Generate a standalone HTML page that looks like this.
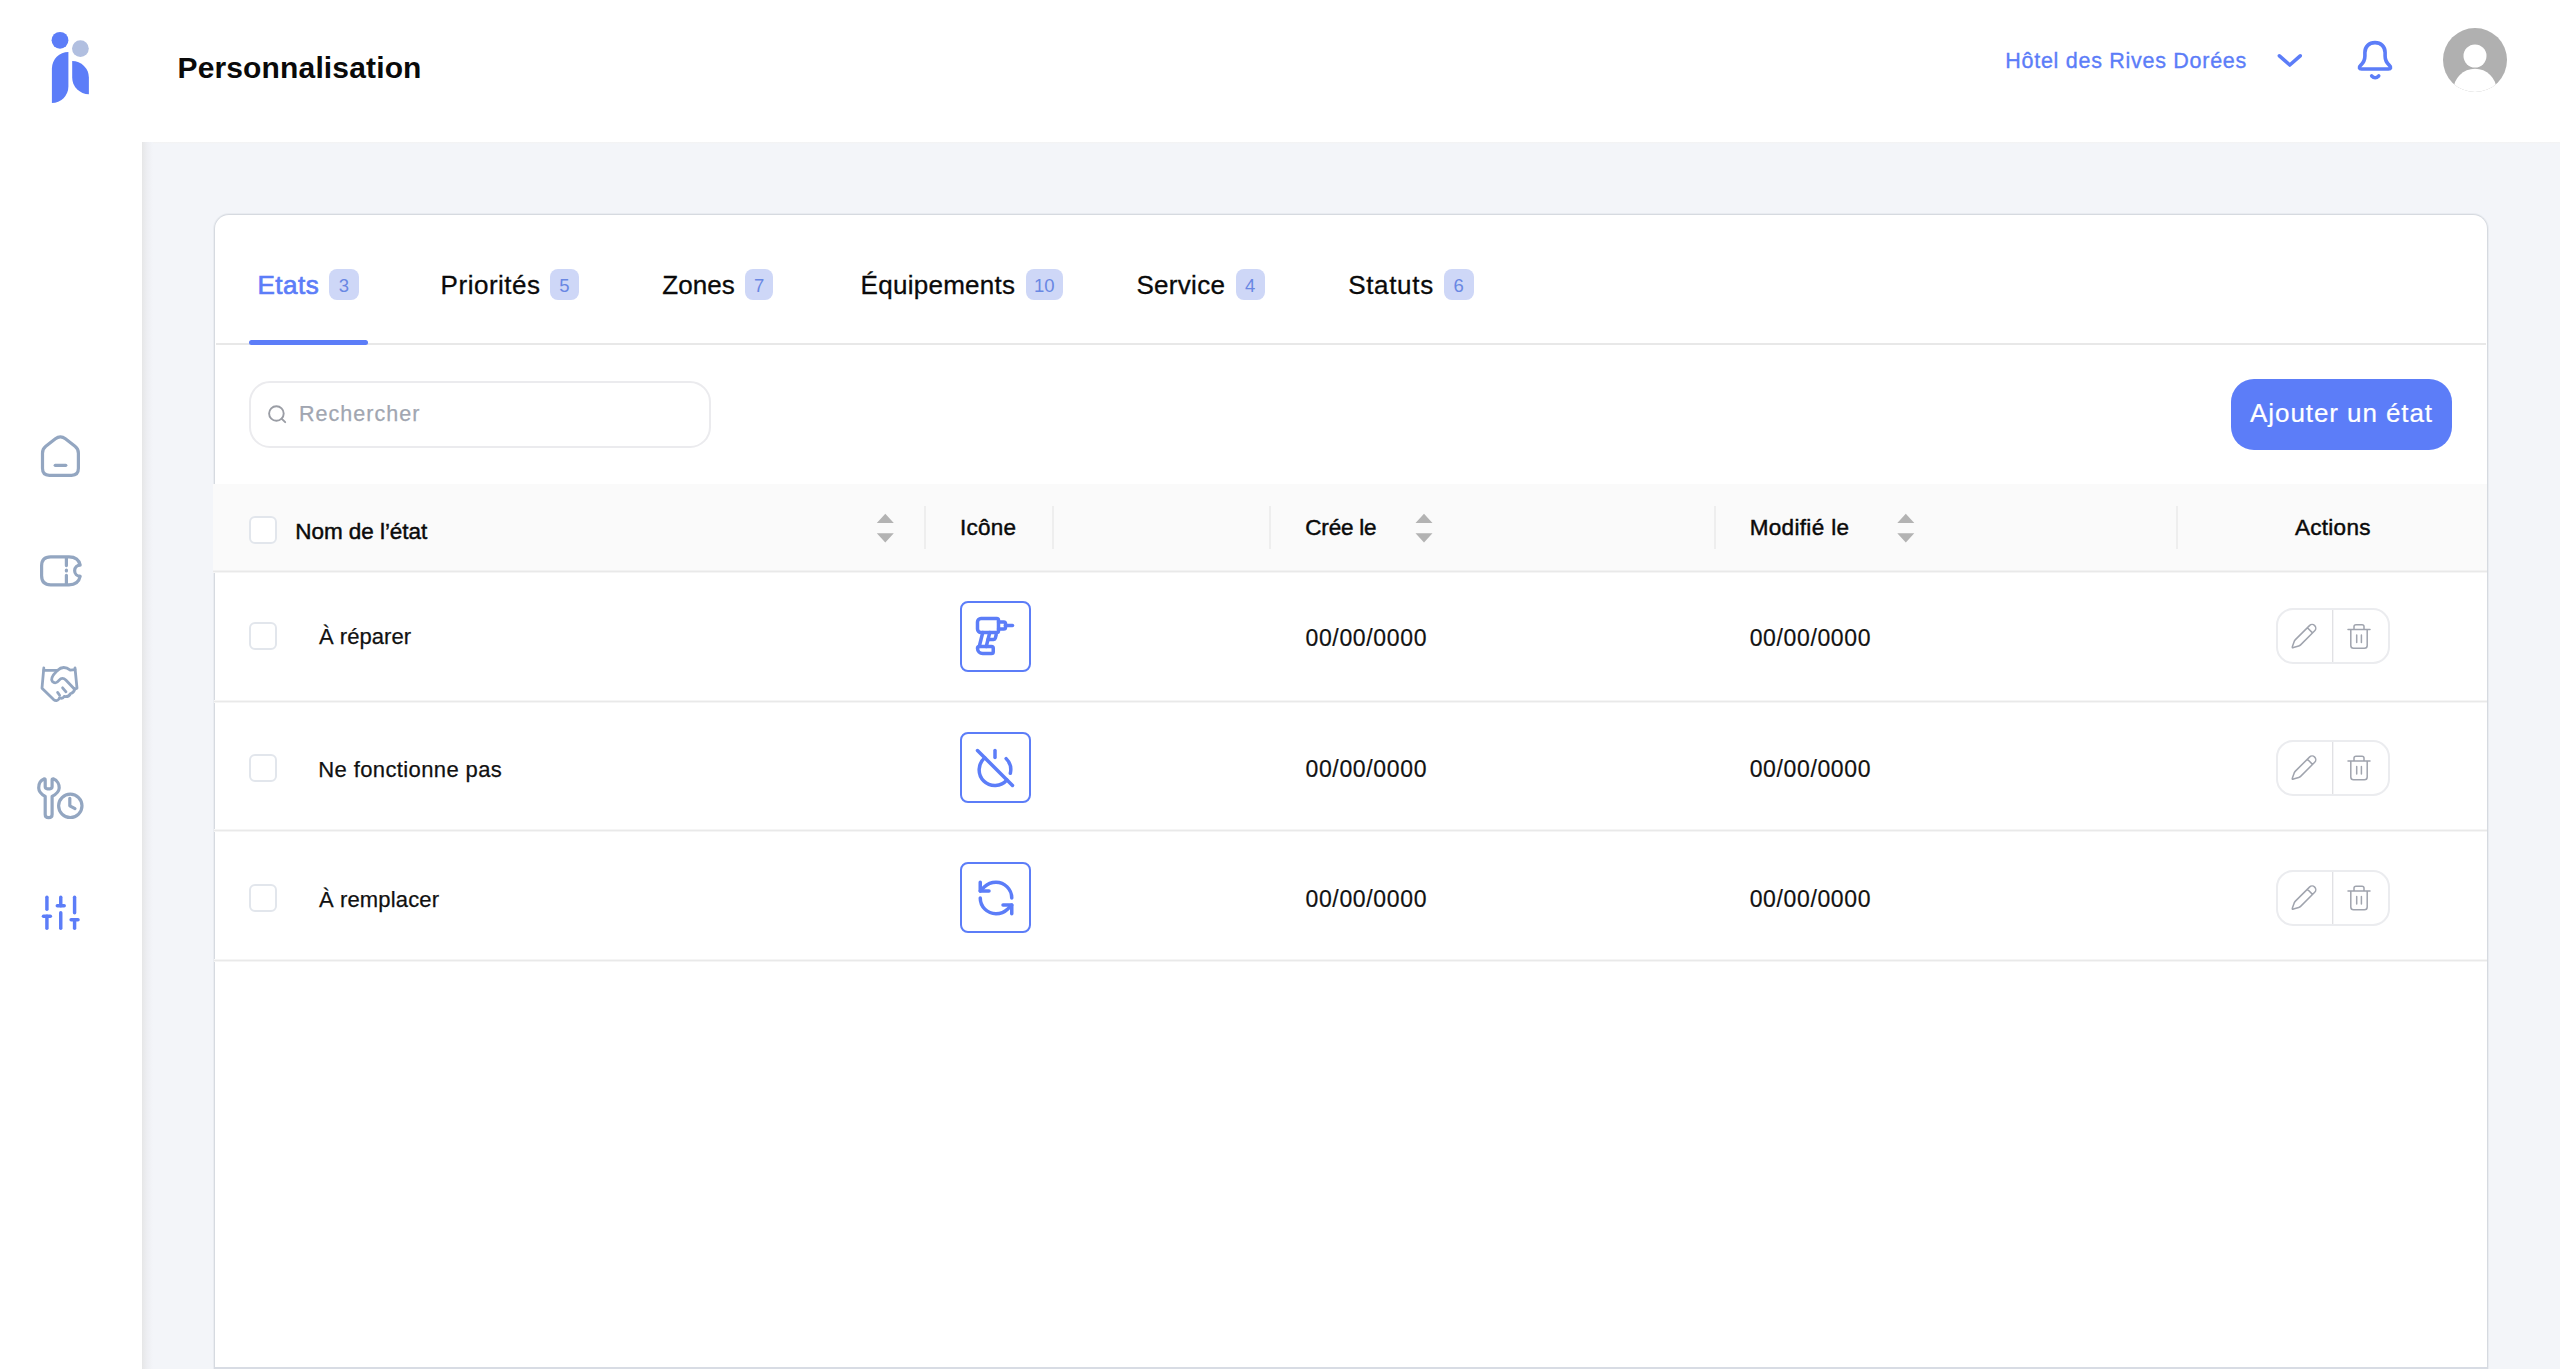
<!DOCTYPE html>
<html lang="fr">
<head>
<meta charset="utf-8">
<title>Personnalisation</title>
<style>
*{box-sizing:border-box;margin:0;padding:0}
html,body{width:2560px;height:1369px;overflow:hidden;background:#fff;font-family:"Liberation Sans",sans-serif}
.abs,.t,.badge,svg{position:absolute}
.t{white-space:nowrap;line-height:1em;display:block}
#main{left:142px;top:142px;width:2418px;height:1227px;background:#f3f5f9}
#main .shl{left:0;top:0;width:11px;height:100%;background:linear-gradient(90deg,#e6e6e7 0,#e9eaec 18%,#eeeff3 50%,#f3f5f9 100%)}
#main .sht{left:0;top:0;width:100%;height:2px;background:linear-gradient(180deg,#f3f3f3 0,#f3f5f9 100%)}
#card{left:214px;top:214px;width:2274px;height:1155px;background:#fff;border:1px solid #d6dae0;border-bottom:2px solid #d8dce4;border-radius:15px 15px 0 0;box-shadow:0 0 0 1px #e9ecf1}
.hline{left:216px;width:2270px;height:2px;background:#e8e8e8}
.rline{left:214px;width:2273px;height:3px;background:linear-gradient(180deg,#f5f5f5 0,#f5f5f5 33.3%,#e9e9e9 33.3%,#e9e9e9 66.6%,#f5f5f5 66.6%,#f5f5f5 100%)}
#tabline{top:343px}
#tabsel{left:249px;top:340px;width:119px;height:5px;border-radius:3px;background:#5c7df8}
.badge{top:269px;height:31px;border-radius:8px;background:#ced7f7;color:#6987e3;font-size:18.5px;line-height:33px;text-align:center}
#search{left:249px;top:381px;width:462px;height:67px;border:2px solid #ebebee;border-radius:21px;background:#fff}
#btn{left:2231px;top:379px;width:221px;height:71px;border-radius:23px;background:#5c7df8}
#thead{left:213px;top:484px;width:2274px;height:86px;background:#fafafa}
.vdiv{top:506px;width:2px;height:43px;background:#eeeeee}
.cb{left:249px;width:28px;height:28px;border:2px solid #e2e6ec;border-radius:6px;background:#fff}
.ibox{left:960px;width:71px;height:71px;border:2px solid #5c7df8;border-radius:8px;background:#fff}
.act{left:2276px;width:114px;height:56px;border:2px solid #ebecef;border-radius:17px;background:#fff}
.act i{position:absolute;left:54px;top:0;width:1px;height:52px;background:#e1e1e4;box-shadow:1px 0 0 #f4f4f6}
</style>
</head>
<body>
<!-- main gray area -->
<div id="main" class="abs"><div class="abs sht"></div><div class="abs shl"></div></div>

<!-- card -->
<div id="card" class="abs"></div>
<div id="tabline" class="abs hline"></div>
<div id="tabsel" class="abs"></div>
<div class="badge" style="left:329.25px;width:29.50px">3</div>
<div class="badge" style="left:549.50px;width:29.75px">5</div>
<div class="badge" style="left:745.25px;width:27.75px">7</div>
<div class="badge" style="left:1026.00px;width:36.50px">10</div>
<div class="badge" style="left:1235.50px;width:29.50px">4</div>
<div class="badge" style="left:1444.00px;width:29.50px">6</div>

<div id="search" class="abs"></div>
<div id="btn" class="abs"></div>

<div id="thead" class="abs"></div>
<div class="abs rline" style="top:570px;left:213px;width:2274px;background:linear-gradient(180deg,#f2f2f2 0,#f2f2f2 33.3%,#e9e9e9 33.3%,#e9e9e9 66.6%,#f5f5f5 66.6%,#f5f5f5 100%)"></div>
<div class="abs rline" style="top:700px"></div>
<div class="abs rline" style="top:829px"></div>
<div class="abs rline" style="top:959px"></div>

<div class="abs vdiv" style="left:924px"></div>
<div class="abs vdiv" style="left:1052px"></div>
<div class="abs vdiv" style="left:1269px"></div>
<div class="abs vdiv" style="left:1714px"></div>
<div class="abs vdiv" style="left:2176px"></div>

<div class="abs cb" style="top:516px"></div>
<div class="abs cb" style="top:622px"></div>
<div class="abs cb" style="top:754px"></div>
<div class="abs cb" style="top:884px"></div>

<div class="abs ibox" style="top:601px"></div>
<div class="abs ibox" style="top:732px"></div>
<div class="abs ibox" style="top:862px"></div>

<div class="abs act" style="top:608px"><i></i></div>
<div class="abs act" style="top:740px"><i></i></div>
<div class="abs act" style="top:870px"><i></i></div>

<!-- logo -->
<svg style="left:40px;top:20px" width="70" height="100" viewBox="40 20 70 100">
<circle cx="60" cy="40.3" r="8.4" fill="#5c7df8"/>
<circle cx="80.4" cy="48.6" r="8.4" fill="#b1bfe0"/>
<path d="M68.4 52 A16.5 16.5 0 0 0 51.9 68.5 V103 A16.5 16.5 0 0 0 68.4 86.5 Z" fill="#5c7df8"/>
<path d="M72.2 61 A16.7 16.7 0 0 1 88.9 77.7 V94.2 A16.7 16.7 0 0 1 72.2 77.5 Z" fill="#5c7df8"/>
</svg>

<!-- sidebar icons -->
<svg style="left:30px;top:425px" width="60" height="60" viewBox="30 425 60 60" fill="none" stroke="#93a6c1" stroke-width="3.2" stroke-linecap="round" stroke-linejoin="round">
<path d="M42.5 468.3 V453.2 Q42.5 448.9 45.8 446.3 L55.4 438.8 Q60.4 435 65.4 438.8 L75 446.3 Q78.4 448.9 78.4 453.2 V468.3 Q78.4 475.3 71.6 475.3 H49.3 Q42.5 475.3 42.5 468.3 Z"/>
<path d="M55.2 465.3 H65.8"/>
</svg>

<svg style="left:30px;top:540px" width="60" height="60" viewBox="30 540 60 60" fill="none" stroke="#93a6c1" stroke-width="3.2" stroke-linecap="round" stroke-linejoin="round">
<path d="M80.2 565.1 C79 559.5 75 556.8 69 556.8 H50.6 Q41.6 556.8 41.6 565.8 V575.8 Q41.6 584.8 50.6 584.8 H69 C75 584.8 79 582 80.2 576.2 A5.55 5.55 0 0 1 80.2 565.1 Z"/>
<path d="M66.4 557.5 V565.6 M66.4 570 V571 M66.4 575.3 V584"/>
</svg>

<svg style="left:30px;top:655px" width="60" height="60" viewBox="30 655 60 60" fill="none" stroke="#93a6c1" stroke-width="2.8" stroke-linecap="round" stroke-linejoin="round">
<path d="M43.8 668 L42 688.2 L53.6 699.6 Q56.6 702 59 699 L59.6 697.6 Q62.5 699.3 64.2 696.4 Q68.6 697.4 70.6 693.5 Q74 692.8 74.6 689.3"/>
<path d="M43.8 670.4 H57.4 Q63.4 664.6 70.3 670.2 L75 669.6"/>
<path d="M75 668 L77 688.2 L74.6 689.3 L65.8 680 Q62.3 676.6 59.2 680.2 Q55.6 684.6 52.4 681.6 Q49.4 678.2 57.4 670.4"/>
<path d="M57.6 692.4 L59.6 695.2 M62.6 687.8 L66 691.8"/>
</svg>

<svg style="left:30px;top:770px" width="60" height="60" viewBox="30 770 60 60" fill="none" stroke="#93a6c1" stroke-width="3.2" stroke-linecap="round" stroke-linejoin="round">
<path d="M44.4 778.8 Q45.2 778.8 45.2 780 V786.6 Q45.2 788.8 47.4 788.8 H49.9 Q52.1 788.8 52.1 786.6 V780 Q52.1 778.8 53.2 778.8 C57.5 780.4 59.4 784.6 59.2 788 C59 791.4 56.6 794 52.1 796.4 V814.4 Q52.1 817.6 48.65 817.6 Q45.2 817.6 45.2 814.4 V796.4 C40.8 794 38.8 791.4 38.7 788 C38.6 784.6 40.2 780.4 44.4 778.8 Z"/>
<circle cx="70.3" cy="805.8" r="11.7"/>
<path d="M69.8 798.3 V805.8 L75 808.6"/>
</svg>

<svg style="left:39.95px;top:891.66px" width="41.5" height="41.5" viewBox="0 0 24 24" fill="none" stroke="#5c7df8" stroke-width="2" stroke-linecap="round" stroke-linejoin="round">
<line x1="4" y1="21" x2="4" y2="14"/><line x1="4" y1="10" x2="4" y2="3"/><line x1="12" y1="21" x2="12" y2="12"/><line x1="12" y1="8" x2="12" y2="3"/><line x1="20" y1="21" x2="20" y2="16"/><line x1="20" y1="12" x2="20" y2="3"/><line x1="2" y1="14" x2="6" y2="14"/><line x1="10" y1="8" x2="14" y2="8"/><line x1="18" y1="16" x2="22" y2="16"/>
</svg>

<!-- header right -->
<svg style="left:2270px;top:40px" width="40" height="40" viewBox="2270 40 40 40" fill="none" stroke="#5c7df8" stroke-width="3.6" stroke-linecap="round" stroke-linejoin="round">
<path d="M2279.4 55.8 L2289.8 65.0 L2300.2 55.8"/>
</svg>
<svg style="left:2350px;top:35px" width="50" height="50" viewBox="2350 35 50 50" fill="none" stroke="#5c7df8" stroke-width="3.6" stroke-linecap="round" stroke-linejoin="round">
<path d="M2375 42.6 C2369 42.6 2364.9 46.6 2364.9 52.6 V56 C2364.9 60.6 2363.6 62.8 2360.6 65.4 C2358.6 67.2 2359.2 69 2361.6 69 H2388.4 C2390.8 69 2391.4 67.2 2389.4 65.4 C2386.4 62.8 2385.1 60.6 2385.1 56 V52.6 C2385.1 46.6 2381 42.6 2375 42.6 Z"/>
<path d="M2371.7 75.9 Q2375.2 79.6 2378.7 75.9"/>
</svg>
<div class="abs" style="left:2443px;top:28px;width:64px;height:64px;border-radius:50%;overflow:hidden;background:#b0b0b0"><svg style="left:0;top:0" width="64" height="64" viewBox="0 0 64 64" fill="#fff"><circle cx="32" cy="28" r="11.5"/><ellipse cx="32" cy="62" rx="21.5" ry="21.3"/></svg></div>

<!-- search icon -->
<svg style="left:262px;top:400px" width="30" height="30" viewBox="262 400 30 30" fill="none" stroke="#9a9da5" stroke-width="1.9" stroke-linecap="round">
<circle cx="276.4" cy="413.5" r="7.3"/><path d="M281.8 418.8 L285.2 422.2"/>
</svg>

<!-- sort arrows -->
<svg style="left:0;top:0" width="2560" height="600" viewBox="0 0 2560 600" fill="#b3b3b3">
<path d="M876.8 523 L885.3 513.8 L893.8 523 Z M876.8 533.3 L885.3 542.5 L893.8 533.3 Z"/>
<g transform="translate(538.7 0)"><path d="M876.8 523 L885.3 513.8 L893.8 523 Z M876.8 533.3 L885.3 542.5 L893.8 533.3 Z"/></g><g transform="translate(1020.5 0)"><path d="M876.8 523 L885.3 513.8 L893.8 523 Z M876.8 533.3 L885.3 542.5 L893.8 533.3 Z"/></g>
</svg>

<!-- state icons -->
<svg style="left:973.8px;top:615.3px" width="42" height="42" viewBox="0 0 24 24" fill="none" stroke="#5c7df8" stroke-width="2" stroke-linecap="round" stroke-linejoin="round">
<path d="M10 18a1 1 0 0 1 1 1v2a1 1 0 0 1-1 1H5a3 3 0 0 1-3-3 1 1 0 0 1 1-1z"/>
<path d="M13 10H4a2 2 0 0 1-2-2V4a2 2 0 0 1 2-2h9a1 1 0 0 1 1 1v6a1 1 0 0 1-1 1l-.81 3.242a1 1 0 0 1-.97.758H8"/>
<path d="M14 4h3a1 1 0 0 1 1 1v2a1 1 0 0 1-1 1h-3"/>
<path d="M18 6h4"/><path d="m5 10-2 8"/><path d="m7 18 2-8"/>
</svg>
<svg style="left:974.1px;top:747px" width="42" height="42" viewBox="0 0 24 24" fill="none" stroke="#5c7df8" stroke-width="2" stroke-linecap="round" stroke-linejoin="round">
<path d="M18.36 6.64A9 9 0 0 1 20.77 15"/><path d="M6.16 6.16a9 9 0 1 0 12.68 12.68"/><path d="M12 2v4"/><path d="m2 2 20 20"/>
</svg>
<svg style="left:974.6px;top:877px" width="42" height="42" viewBox="0 0 24 24" fill="none" stroke="#5c7df8" stroke-width="2" stroke-linecap="round" stroke-linejoin="round">
<path d="M21 12a9 9 0 0 0-9-9 9.750 9.750 0 0 0-6.740 2.740L3 8"/><path d="M3 3v5h5"/><path d="M3 12a9 9 0 0 0 9 9 9.750 9.750 0 0 0 6.740-2.740L21 16"/><path d="M16 16h5v5"/>
</svg>

<!-- action icons -->
<svg style="left:0;top:0" width="2560" height="1000" viewBox="0 0 2560 1000" fill="none" stroke="#a0a4ae" stroke-width="1.5" stroke-linecap="round" stroke-linejoin="round">
<g><path d="M2293.4 647.5 Q2291.8 648.2 2292.4 646.5 L2294.2 641.4 Q2294.6 640.4 2295.4 639.6 L2309.5 625.6 A3.65 3.65 0 0 1 2314.7 630.8 L2300.6 644.9 Q2299.8 645.7 2298.7 646 Z M2307.4 627.8 L2312.5 632.9"/></g>
<g><path d="M2348 629.4 H2370 M2354 629.4 V626.6 Q2354 624.8 2356 624.8 H2362 Q2364 624.8 2364 626.6 V629.4 M2350.8 629.4 V645.4 Q2350.8 648.2 2353.6 648.2 H2364.4 Q2367.2 648.2 2367.2 645.4 V629.4 M2356.7 635 V642.6 M2361.4 635 V642.6"/></g>
<g transform="translate(0 131.5)"><path d="M2293.4 647.5 Q2291.8 648.2 2292.4 646.5 L2294.2 641.4 Q2294.6 640.4 2295.4 639.6 L2309.5 625.6 A3.65 3.65 0 0 1 2314.7 630.8 L2300.6 644.9 Q2299.8 645.7 2298.7 646 Z M2307.4 627.8 L2312.5 632.9"/><path d="M2348 629.4 H2370 M2354 629.4 V626.6 Q2354 624.8 2356 624.8 H2362 Q2364 624.8 2364 626.6 V629.4 M2350.8 629.4 V645.4 Q2350.8 648.2 2353.6 648.2 H2364.4 Q2367.2 648.2 2367.2 645.4 V629.4 M2356.7 635 V642.6 M2361.4 635 V642.6"/></g>
<g transform="translate(0 261.5)"><path d="M2293.4 647.5 Q2291.8 648.2 2292.4 646.5 L2294.2 641.4 Q2294.6 640.4 2295.4 639.6 L2309.5 625.6 A3.65 3.65 0 0 1 2314.7 630.8 L2300.6 644.9 Q2299.8 645.7 2298.7 646 Z M2307.4 627.8 L2312.5 632.9"/><path d="M2348 629.4 H2370 M2354 629.4 V626.6 Q2354 624.8 2356 624.8 H2362 Q2364 624.8 2364 626.6 V629.4 M2350.8 629.4 V645.4 Q2350.8 648.2 2353.6 648.2 H2364.4 Q2367.2 648.2 2367.2 645.4 V629.4 M2356.7 635 V642.6 M2361.4 635 V642.6"/></g>
</svg>


<span class="t" style="left:177.48px;top:53px;font-size:30px;font-weight:bold;color:#0a0a0a;letter-spacing:0.150px">Personnalisation</span>
<span class="t" style="left:2005.29px;top:51px;font-size:21.5px;font-weight:normal;color:#5c7df8;letter-spacing:0.721px;-webkit-text-stroke:0.35px #5c7df8">Hôtel des Rives Dorées</span>
<span class="t" style="left:257.47px;top:272px;font-size:26px;font-weight:normal;color:#5c7df8;letter-spacing:0.528px;-webkit-text-stroke:0.7px #5c7df8">Etats</span>
<span class="t" style="left:440.61px;top:272px;font-size:26px;font-weight:normal;color:#0a0a0a;letter-spacing:0.514px;-webkit-text-stroke:0.3px #0a0a0a">Priorités</span>
<span class="t" style="left:662.26px;top:272px;font-size:26px;font-weight:normal;color:#0a0a0a;letter-spacing:0.044px;-webkit-text-stroke:0.3px #0a0a0a">Zones</span>
<span class="t" style="left:860.61px;top:272px;font-size:26px;font-weight:normal;color:#0a0a0a;letter-spacing:0.260px;-webkit-text-stroke:0.3px #0a0a0a">Équipements</span>
<span class="t" style="left:1136.45px;top:272px;font-size:26px;font-weight:normal;color:#0a0a0a;letter-spacing:0.291px;-webkit-text-stroke:0.3px #0a0a0a">Service</span>
<span class="t" style="left:1348.15px;top:272px;font-size:26px;font-weight:normal;color:#0a0a0a;letter-spacing:0.679px;-webkit-text-stroke:0.3px #0a0a0a">Statuts</span>
<span class="t" style="left:299.07px;top:404px;font-size:21.5px;font-weight:normal;color:#a1a6b1;letter-spacing:1.025px;-webkit-text-stroke:0.25px #a1a6b1">Rechercher</span>
<span class="t" style="left:2250.11px;top:400px;font-size:26px;font-weight:normal;color:#ffffff;letter-spacing:0.917px;-webkit-text-stroke:0.2px #ffffff">Ajouter un état</span>
<span class="t" style="left:295.26px;top:521px;font-size:22.5px;font-weight:normal;color:#0a0a0a;letter-spacing:-0.051px;-webkit-text-stroke:0.45px #0a0a0a">Nom de l’état</span>
<span class="t" style="left:959.91px;top:517px;font-size:22.5px;font-weight:normal;color:#0a0a0a;letter-spacing:0.266px;-webkit-text-stroke:0.45px #0a0a0a">Icône</span>
<span class="t" style="left:1305.33px;top:517px;font-size:22.5px;font-weight:normal;color:#0a0a0a;letter-spacing:-0.219px;-webkit-text-stroke:0.45px #0a0a0a">Crée le</span>
<span class="t" style="left:1749.64px;top:517px;font-size:22.5px;font-weight:normal;color:#0a0a0a;letter-spacing:0.343px;-webkit-text-stroke:0.45px #0a0a0a">Modifié le</span>
<span class="t" style="left:2294.92px;top:517px;font-size:22.5px;font-weight:normal;color:#0a0a0a;letter-spacing:0.296px;-webkit-text-stroke:0.45px #0a0a0a">Actions</span>
<span class="t" style="left:318.90px;top:626px;font-size:22px;font-weight:normal;color:#111111;letter-spacing:0.054px;-webkit-text-stroke:0.25px #111111">À réparer</span>
<span class="t" style="left:318.33px;top:759px;font-size:22px;font-weight:normal;color:#111111;letter-spacing:0.386px;-webkit-text-stroke:0.25px #111111">Ne fonctionne pas</span>
<span class="t" style="left:318.90px;top:889px;font-size:22px;font-weight:normal;color:#111111;letter-spacing:0.154px;-webkit-text-stroke:0.25px #111111">À remplacer</span>
<span class="t" style="left:1305.47px;top:627px;font-size:23px;font-weight:normal;color:#111111;letter-spacing:0.656px;-webkit-text-stroke:0.2px #111111">00/00/0000</span>
<span class="t" style="left:1749.71px;top:627px;font-size:23px;font-weight:normal;color:#111111;letter-spacing:0.627px;-webkit-text-stroke:0.2px #111111">00/00/0000</span>
<span class="t" style="left:1305.47px;top:758px;font-size:23px;font-weight:normal;color:#111111;letter-spacing:0.656px;-webkit-text-stroke:0.2px #111111">00/00/0000</span>
<span class="t" style="left:1749.71px;top:758px;font-size:23px;font-weight:normal;color:#111111;letter-spacing:0.627px;-webkit-text-stroke:0.2px #111111">00/00/0000</span>
<span class="t" style="left:1305.47px;top:888px;font-size:23px;font-weight:normal;color:#111111;letter-spacing:0.656px;-webkit-text-stroke:0.2px #111111">00/00/0000</span>
<span class="t" style="left:1749.71px;top:888px;font-size:23px;font-weight:normal;color:#111111;letter-spacing:0.627px;-webkit-text-stroke:0.2px #111111">00/00/0000</span>
</body>
</html>
